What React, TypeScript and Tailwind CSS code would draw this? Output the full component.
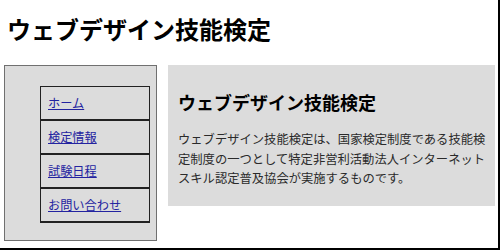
const navItems = ["ホーム", "検定情報", "試験日程", "お問い合わせ"];

export default function App() {
  return (
    <div
      className="h-[250px] w-[500px] border-b-2 border-r-2 border-black bg-white"
      style={{ fontFamily: '"Noto Sans CJK JP", "Noto Sans", sans-serif' }}
    >
      <h1 className="pl-[7px] pt-[13px] text-[24px] font-bold leading-[32px] text-black">
        ウェブデザイン技能検定
      </h1>

      <div className="mt-[20px] flex items-start">
        <aside className="ml-[4px] h-[176px] w-[153px] border border-[#707070] bg-[#dcdcdc] pl-[35px] pt-[20px]">
          <ul className="w-[110px] border-t border-[#222]">
            {navItems.map((item) => (
              <li
                key={item}
                className="flex h-[34px] items-center border-x border-b-2 border-[#222] pl-[7px]"
              >
                <a href="#" className="text-[12.2px] text-[#2323a0] underline">
                  {item}
                </a>
              </li>
            ))}
          </ul>
        </aside>

        <main className="ml-[11px] h-[141px] w-[327px] bg-[#dcdcdc] pl-[10px] pr-[8px] pt-[25px]">
          <h2 className="text-[18px] font-bold leading-[24px] text-black">ウェブデザイン技能検定</h2>
          <p className="mt-[16px] text-[12.3px] leading-[19.5px] text-[#2a2a2a]">
            ウェブデザイン技能検定は、国家検定制度である技能検定制度の一つとして特定非営利活動法人インターネットスキル認定普及協会が実施するものです。
          </p>
        </main>
      </div>
    </div>
  );
}
